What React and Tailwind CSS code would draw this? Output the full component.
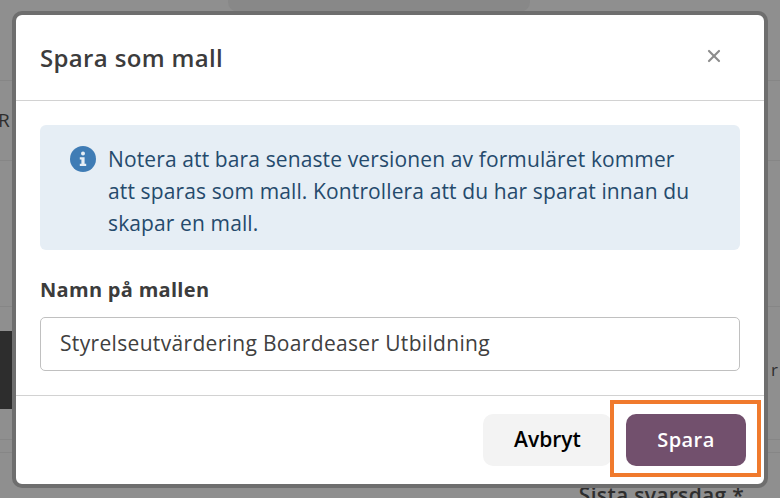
import { X } from 'lucide-react'

function InfoIcon() {
  return (
    <svg viewBox="0 0 26 26" className="mt-[3px] h-[26px] w-[26px] shrink-0">
      <circle cx="13" cy="13" r="13" fill="#3f7cb5" />
      <circle cx="13" cy="7.6" r="2" fill="#e6eef5" />
      <path d="M9.8 11.2h4.8v6.6h1.6v2.2H9.8v-2.2h1.6v-4.4H9.8z" fill="#e6eef5" />
    </svg>
  )
}

// sidan bakom dialogen, nedtonad
function Backdrop() {
  return (
    <div className="flex h-[498px] flex-col overflow-hidden bg-[#8f8f8f] text-[#2e2e2e]">
      <div className="h-[81px] shrink-0 border-b border-[#868686] pl-[228px]">
        <div className="h-[12px] w-[302px] rounded-b-[10px] bg-[#888888]" />
      </div>
      <div className="flex h-[80px] shrink-0 items-center border-b border-[#868686] text-[19px]">
        <span className="ml-[-2px]">R</span>
      </div>
      <div className="h-[146px] shrink-0 border-b border-[#868686]" />
      <div className="flex h-[133px] shrink-0 items-center justify-between border-b border-[#868686] pb-[6px]">
        <div className="h-[78px] w-[12px] bg-[#2d2d2d]" />
        <span className="mr-[2px] text-[17px]">r</span>
      </div>
      <div className="h-[13px] shrink-0 border-b border-[#868686]" />
      <div className="flex justify-end pr-[36px] pt-[31px]">
        <span className="text-[21px] font-semibold leading-[22px] tracking-[0.3px]">Sista svarsdag *</span>
      </div>
    </div>
  )
}

export default function App() {
  return (
    <div className="relative h-[498px] w-[780px] overflow-hidden font-['Open_Sans',sans-serif]">
      <Backdrop />
      <div className="absolute left-[12px] top-[11px] flex h-[477px] w-[756px] flex-col rounded-[10px] border-4 border-[#6e6e6e] bg-white">
        <div className="flex h-[86px] shrink-0 items-center justify-between border-b border-[#d2d2d2] pl-[24px] pr-[40px]">
          <h2 className="text-[24px] font-semibold tracking-[0.35px] text-[#3c3c3c]">Spara som mall</h2>
          <X size={20} strokeWidth={2.6} className="mb-[4px] text-[#8c8c8c]" />
        </div>
        <div className="flex-1 px-[24px] pt-[24px]">
          <div className="flex h-[125px] gap-[12px] rounded-[6px] bg-[#e6eef5] pl-[30px] pr-[40px] pt-[18px] text-[21px] leading-[32px] tracking-[0.12px] text-[#254a6c]">
            <InfoIcon />
            <p>Notera att bara senaste versionen av formuläret kommer att sparas som mall. Kontrollera att du har sparat innan du skapar en mall.</p>
          </div>
          <label className="mt-[26px] block text-[20px] font-bold leading-[28px] tracking-[0.3px] text-[#3c3c3c]">Namn på mallen</label>
          <div className="mt-[13px] flex h-[54px] items-center rounded-[5px] border border-[#c0c0c0] px-[19px] text-[21px] tracking-[0.33px] text-[#404040]">
            Styrelseutvärdering Boardeaser Utbildning
          </div>
        </div>
        <div className="flex h-[89px] shrink-0 items-start justify-end gap-[14px] border-t border-[#d2d2d2] pr-[18px] pt-[18px]">
          <button className="h-[52px] w-[129px] rounded-[10px] bg-[#f3f3f3] text-[21px] font-semibold text-black">Avbryt</button>
          <button className="h-[52px] w-[120px] rounded-[10px] bg-[#72506d] text-[20px] font-semibold tracking-[0.4px] text-white">Spara</button>
        </div>
      </div>
      <div className="absolute left-[610px] top-[400px] h-[77px] w-[151px] border-[4px] border-[#f07a2d]" />
    </div>
  )
}
